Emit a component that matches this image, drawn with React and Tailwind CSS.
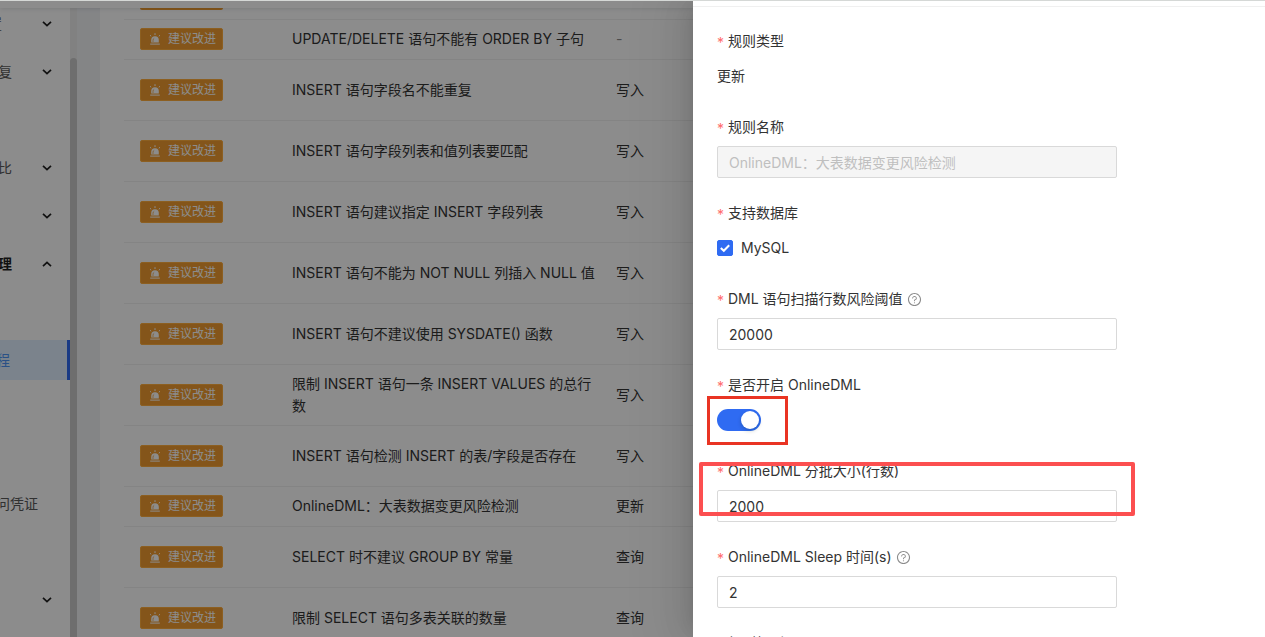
import { AiOutlineQuestionCircle } from "react-icons/ai";

const rules = [
  { name: "UPDATE/DELETE 语句不能有 ORDER BY 子句", type: "-", compact: true },
  { name: "INSERT 语句字段名不能重复", type: "写入" },
  { name: "INSERT 语句字段列表和值列表要匹配", type: "写入" },
  { name: "INSERT 语句建议指定 INSERT 字段列表", type: "写入" },
  { name: "INSERT 语句不能为 NOT NULL 列插入 NULL 值", type: "写入" },
  { name: "INSERT 语句不建议使用 SYSDATE() 函数", type: "写入" },
  { name: "限制 INSERT 语句一条 INSERT VALUES 的总行数", type: "写入" },
  { name: "INSERT 语句检测 INSERT 的表/字段是否存在", type: "写入" },
  { name: "OnlineDML：大表数据变更风险检测", type: "更新", compact: true },
  { name: "SELECT 时不建议 GROUP BY 常量", type: "查询" },
  { name: "限制 SELECT 语句多表关联的数量", type: "查询" },
];

const menu = [
  { label: "置", arrow: "down", width: "w-[2px]" },
  { label: "复", arrow: "down", width: "w-[12px]" },
  {},
  { label: "比", arrow: "down", width: "w-[12px]" },
  { arrow: "down" },
  { label: "理", arrow: "up", strong: true, width: "w-[12px]" },
  {},
  { label: "程", active: true, width: "w-[10px]" },
  {},
  {},
  { label: "问凭证", width: "w-[38px]" },
  {},
  { arrow: "down" },
];

function Chevron({ up }) {
  return (
    <svg viewBox="0 0 10 6" className={up ? "h-[6px] w-[10px] rotate-180" : "h-[6px] w-[10px]"} fill="none" stroke="#1f1f1f" strokeWidth="1.7">
      <path d="M1 0.8 L5 4.6 L9 0.8" />
    </svg>
  );
}

function Siren() {
  return (
    <svg viewBox="0 0 12 12" className="mr-[7px] size-3 shrink-0" fill="none" stroke="white" strokeWidth="1">
      <path d="M2.2 9.6 V7 A3.8 3.8 0 0 1 9.8 7 V9.6 Z" fill="white" stroke="none" />
      <path d="M4 9 V7.2 A2 2 0 0 1 5.2 5.3" stroke="#f09c30" strokeWidth="0.7" />
      <path d="M1.2 11.1 H10.8" />
      <path d="M6 0.2 V2 M1 2.2 L2.2 3.3 M11 2.2 L9.8 3.3" />
    </svg>
  );
}

function MenuItem({ item }) {
  const tone = item.active
    ? "bg-[#e0eeff] text-[#4d94f5] border-r-[3px] border-[#2f6bf2]"
    : item.strong
      ? "font-semibold text-[#1f1f1f]"
      : "text-[#595959]";
  return (
    <li className="h-[40px]">
      <a href="#menu" className={`flex h-full w-[70px] items-center ${tone}`}>
        {item.label && (
          <span className={`flex shrink-0 justify-end whitespace-nowrap ${item.width}`}>{item.label}</span>
        )}
        {item.arrow && (
          <span className="ml-auto pr-[18px]">
            <Chevron up={item.arrow === "up"} />
          </span>
        )}
      </a>
    </li>
  );
}

function Badge() {
  return (
    <span className="flex h-[22px] w-[83px] items-center rounded-[2px] border border-[#ffad3d] bg-[#f09c30] pl-2 text-xs text-white">
      <Siren />
      建议改进
    </span>
  );
}

function Field({ id, label, help, group, children }) {
  const Tag = group ? "span" : "label";
  return (
    <div className="relative">
      <div className="mb-2 flex h-[22px] items-center">
        <span className="w-[11px] shrink-0 pt-1 text-[#ff6b6c]">*</span>
        <Tag {...(group ? {} : { htmlFor: id })} className="whitespace-nowrap">{label}</Tag>
        {help && <AiOutlineQuestionCircle className="ml-1 size-[15px] text-[#8c8c8c]" />}
      </div>
      <div className="flex h-8 items-center">{children}</div>
    </div>
  );
}

function TextBox({ id, value, disabled }) {
  return (
    <input
      id={id}
      type="text"
      defaultValue={value}
      disabled={disabled}
      className="h-8 w-full rounded-[2px] border border-[#d9d9d9] bg-white px-[11px] outline-none disabled:bg-[#f5f5f5] disabled:text-[#bfbfbf]"
    />
  );
}

export default function App() {
  return (
    <div className="relative h-screen overflow-hidden bg-white font-['Inter','Noto_Sans_CJK_SC',sans-serif] text-sm leading-[22px] text-[#333333]">
      <div className="flex h-full flex-col">
        <header className="relative z-10 h-2 shrink-0 bg-white shadow-[0_1px_4px_rgba(0,21,41,0.12)]" />
        <div className="flex min-h-0 flex-1">
          <nav className="flex w-[77px] shrink-0">
            <ul className="-mt-1 flex w-[70px] flex-col gap-2 overflow-hidden">
              {menu.map((item, i) => (
                <MenuItem key={i} item={item} />
              ))}
            </ul>
            <div className="w-[7px] bg-[#ececec] pt-[50px]">
              <div className="h-full rounded-t-full bg-[#c8c8c8]" />
            </div>
          </nav>
          <main className="min-w-0 flex-1 overflow-hidden bg-[#f0f2f5] pl-[23px]">
            <div className="min-h-full bg-white pl-6">
              <table className="w-full table-fixed border-collapse">
                <colgroup>
                  <col className="w-[152px]" />
                  <col className="w-[324px]" />
                  <col />
                </colgroup>
                <tbody>
                  <tr className="h-[11px] border-b border-[#f0f0f0]">
                    <td className="pl-4 align-top">
                      <div className="h-[2px] w-[83px] rounded-b-[2px] bg-[#f09c30]" />
                    </td>
                    <td />
                    <td />
                  </tr>
                  {rules.map((rule) => (
                    <tr key={rule.name} className={`border-b border-[#f0f0f0] ${rule.compact ? "h-[40px]" : "h-[61px]"}`}>
                      <td className="pl-4">
                        <Badge />
                      </td>
                      <td className="pl-4">{rule.name}</td>
                      <td className={rule.type === "-" ? "pl-4 text-[#8c8c8c]" : "pl-4"}>{rule.type}</td>
                    </tr>
                  ))}
                </tbody>
              </table>
            </div>
          </main>
        </div>
      </div>

      <div className="absolute inset-0 z-20 bg-black/45" />

      <aside className="absolute inset-y-0 right-0 z-30 w-[572px] bg-white shadow-[-6px_0_16px_-8px_rgba(0,0,0,0.12),-9px_0_28px_0_rgba(0,0,0,0.08),-12px_0_48px_16px_rgba(0,0,0,0.05)]">
        <div className="h-[7px] border-b border-[#f0f0f0]" />
        <form className="flex w-[424px] flex-col gap-6 pt-[23px] pl-6">
          <Field label="规则类型" group>
            更新
          </Field>
          <Field id="rule-name" label="规则名称">
            <TextBox id="rule-name" value="OnlineDML：大表数据变更风险检测" disabled />
          </Field>
          <Field label="支持数据库" group>
            <label className="flex items-center gap-2">
              <span className="relative flex size-4">
                <input type="checkbox" defaultChecked className="peer size-4 appearance-none rounded-[2px] border border-[#d9d9d9] checked:border-[#2f6bf2] checked:bg-[#2f6bf2]" />
                <svg viewBox="0 0 16 16" className="pointer-events-none absolute inset-0 hidden size-4 peer-checked:block" fill="none" stroke="white" strokeWidth="2">
                  <path d="M3.8 8 L6.8 10.8 L12.2 5.2" />
                </svg>
              </span>
              MySQL
            </label>
          </Field>
          <Field id="scan-rows" label="DML 语句扫描行数风险阈值" help>
            <TextBox id="scan-rows" value="20000" />
          </Field>
          <Field id="online-dml" label="是否开启 OnlineDML">
            <button id="online-dml" type="button" role="switch" aria-checked="true" className="flex h-[22px] w-[44px] items-center justify-end rounded-full bg-[#2f6bf2] px-[2px]">
              <span className="size-[18px] rounded-full bg-white shadow-[0_2px_4px_rgba(0,35,11,0.2)]" />
            </button>
            <span className="pointer-events-none absolute -left-[10px] top-[22px] h-[49px] w-[81px] border-[3px] border-[#e93423]" />
          </Field>
          <Field id="batch-size" label="OnlineDML 分批大小(行数)">
            <TextBox id="batch-size" value="2000" />
            <span className="pointer-events-none absolute -left-[18px] top-[2px] h-[54px] w-[436px] rounded-[2px] border-4 border-[#fc4f50]" />
          </Field>
          <Field id="sleep-time" label="OnlineDML Sleep 时间(s)" help>
            <TextBox id="sleep-time" value="2" />
          </Field>
          <Field label="规则级别" group />
        </form>
      </aside>
      <div className="absolute inset-x-0 top-0 z-40 h-px bg-[#d5d8d6]" />
    </div>
  );
}
